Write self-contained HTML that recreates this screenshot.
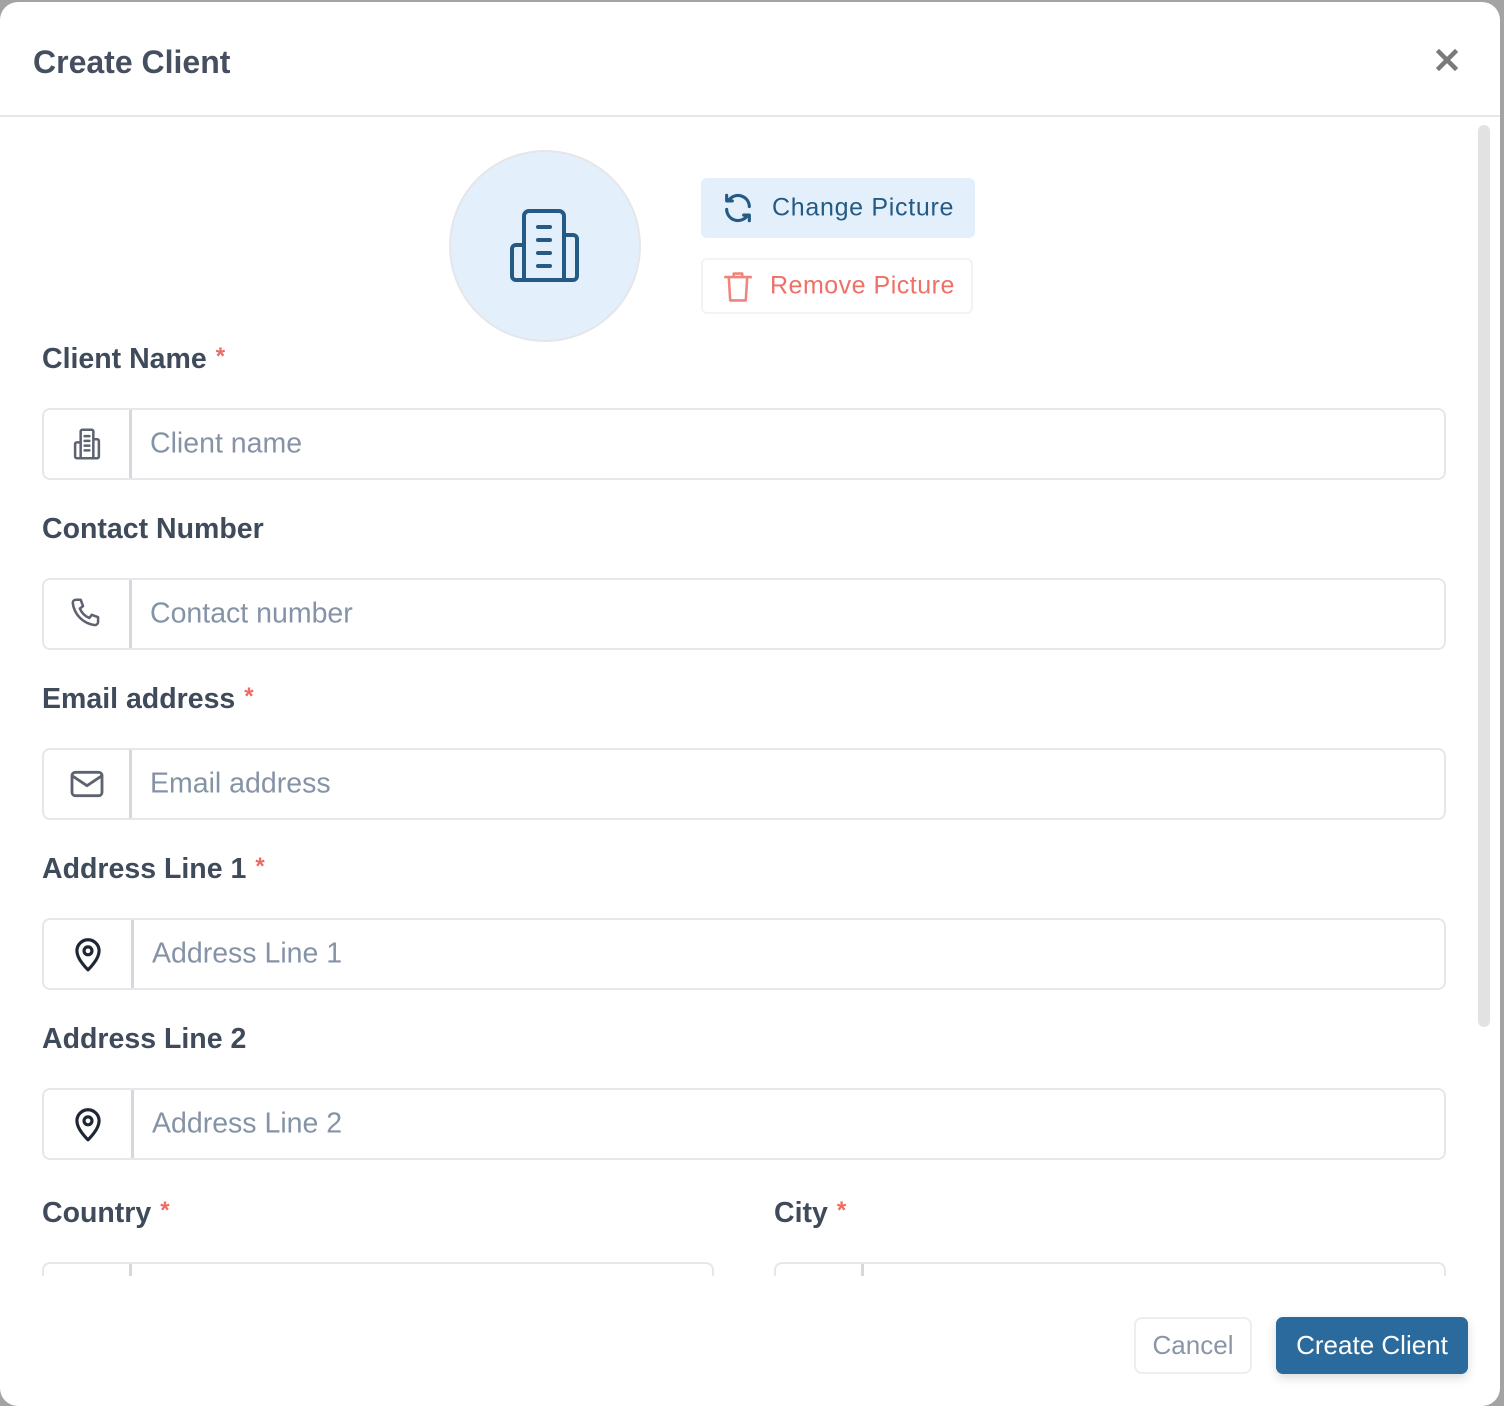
<!DOCTYPE html>
<html><head><meta charset="utf-8"><style>
*{box-sizing:border-box;margin:0;padding:0}
html,body{width:1504px;height:1406px;overflow:hidden}
body{background:#a3a3a3;font-family:"Liberation Sans",sans-serif;position:relative}
.modal{position:absolute;left:0;top:2px;width:1500px;height:1404px;background:#fff;border-radius:18px;overflow:hidden}
.title{position:absolute;left:33px;top:42px;font-size:32px;font-weight:bold;color:#454f5f}
.close{position:absolute;left:1436px;top:47px}
.hr{position:absolute;left:0;top:113px;width:1500px;height:2px;background:#e6e6ec}
.track{position:absolute;left:1478px;top:123px;width:12px;height:902px;border-radius:6px;background:#e2e2e2}
.circle{position:absolute;left:449px;top:148px;width:192px;height:192px;border-radius:50%;background:#e3f0fb;border:2px solid #e4e6ea}
.btn1{position:absolute;left:701px;top:176px;width:274px;height:60px;background:#e3f0fb;border-radius:6px;color:#245a84;font-size:25px;letter-spacing:.7px}
.btn2{position:absolute;left:701px;top:256px;width:272px;height:56px;border:2px solid #f3f3f3;border-radius:6px;color:#ee7066;font-size:25px;letter-spacing:.5px}
.btn1 span,.btn2 span{position:absolute;left:71px;top:50%;transform:translateY(-50%)}
.btn2 span{left:67px}
.btn1 svg,.btn2 svg{position:absolute}
.lbl{position:absolute;left:42px;font-size:28.5px;font-weight:bold;color:#3f4a5a}
.lbl b{color:#ef6a5f;font-size:24px;vertical-align:top;margin-left:9px}
.inp{position:absolute;left:42px;width:1404px;height:72px;border:2px solid #e5e7eb;border-radius:8px}
.inp .ic{position:absolute;left:0;top:0;width:88px;height:100%;border-right:3px solid #d5d8dd;display:flex;align-items:center;justify-content:center}
.inp .ph{position:absolute;left:106px;top:50%;transform:translateY(-50%);font-size:28.5px;color:#8593a6}
.cancel{position:absolute;left:1134px;top:1315px;width:118px;height:57px;border:2px solid #eceef0;border-radius:8px;color:#8a96a6;font-size:26px;text-align:center;line-height:53px}
.create{position:absolute;left:1276px;top:1315px;width:192px;height:57px;background:#2b6a9c;border-radius:7px;color:#fff;font-size:26px;text-align:center;line-height:57px;box-shadow:0 4px 10px rgba(0,0,0,.15)}
</style></head><body>
<div class="modal">
<div class="title">Create Client</div>
<svg class="close" width="22" height="22" viewBox="0 0 22 22"><path d="M3 3L19 19M19 3L3 19" stroke="#7a7a7a" stroke-width="4.5" stroke-linecap="square"/></svg>
<div class="hr"></div>
<div class="track"></div>
<div class="circle"></div>
<svg style="position:absolute;left:507px;top:203px" width="80" height="80" viewBox="0 0 80 80"><g fill="none" stroke="#245a84" stroke-width="4" stroke-linecap="round" stroke-linejoin="round"><path d="M17 75V11a5 5 0 0 1 5-5h30a5 5 0 0 1 5 5v64z"/><path d="M17 40H9a4 4 0 0 0-4 4v27a4 4 0 0 0 4 4h8"/><path d="M57 30h9a4 4 0 0 1 4 4v37a4 4 0 0 1-4 4H57"/><path d="M31 22h12M31 35h12M31 48h12M31 61h12"/></g></svg>
<div class="btn1"><svg style="left:20px;top:13px" width="34" height="34" viewBox="0 0 24 24" fill="none" stroke="#245a84" stroke-width="2.2" stroke-linecap="round" stroke-linejoin="round"><path d="M20 11A8 8 0 0 0 5.5 6.5M4 3v4h4"/><path d="M4 13a8 8 0 0 0 14.5 4.5M20 21v-4h-4"/></svg><span>Change Picture</span></div>
<div class="btn2"><svg style="left:18px;top:10px" width="34" height="34" viewBox="0 0 24 24" fill="none" stroke="#ee857c" stroke-width="1.8" stroke-linecap="round" stroke-linejoin="round"><path d="M3 5h18M9 5V2.5h6V5M5.5 5l1 16.5h11l1-16.5"/></svg><span>Remove Picture</span></div>

<div class="lbl" style="top:341px">Client Name<b>*</b></div>
<div class="inp" style="top:406px"><div class="ic"><svg width="38" height="38" viewBox="0 0 24 24" fill="none" stroke="#5d6470" stroke-width="1.6" stroke-linejoin="round" stroke-linecap="round"><path d="M8 21V4a1 1 0 0 1 1-1h6a1 1 0 0 1 1 1v17zM8 11H5.5a1 1 0 0 0-1 1v8a1 1 0 0 0 1 1H8M16 9h2.5a1 1 0 0 1 1 1v10a1 1 0 0 1-1 1H16M10.5 7h3M10.5 10h3M10.5 13h3M10.5 16h3"/></svg></div><div class="ph">Client name</div></div>

<div class="lbl" style="top:511px">Contact Number</div>
<div class="inp" style="top:576px"><div class="ic"><svg width="38" height="38" viewBox="0 0 24 24" fill="none" stroke="#5d6470" stroke-width="1.6" stroke-linejoin="round"><path d="M5 3h3l1.5 4-2 1.5a11 11 0 0 0 6 6l1.5-2 4 1.5v3a2 2 0 0 1-2 2A16 16 0 0 1 3 5a2 2 0 0 1 2-2z"/></svg></div><div class="ph">Contact number</div></div>

<div class="lbl" style="top:681px">Email address<b>*</b></div>
<div class="inp" style="top:746px"><div class="ic"><svg width="40" height="40" viewBox="0 0 24 24" fill="none" stroke="#5d6470" stroke-width="1.7" stroke-linejoin="round"><rect x="3" y="5" width="18" height="14" rx="2"/><path d="M3 7l9 6 9-6"/></svg></div><div class="ph">Email address</div></div>

<div class="lbl" style="top:851px">Address Line 1<b>*</b></div>
<div class="inp" style="top:916px"><div class="ic" style="width:90px"><svg width="38" height="38" viewBox="0 0 24 24" fill="none" stroke="#1f2733" stroke-width="2" stroke-linejoin="round"><path d="M12 22s7-6.5 7-12a7 7 0 0 0-14 0c0 5.5 7 12 7 12z"/><circle cx="12" cy="10" r="2.5"/></svg></div><div class="ph" style="left:108px">Address Line 1</div></div>

<div class="lbl" style="top:1021px">Address Line 2</div>
<div class="inp" style="top:1086px"><div class="ic" style="width:90px"><svg width="38" height="38" viewBox="0 0 24 24" fill="none" stroke="#1f2733" stroke-width="2" stroke-linejoin="round"><path d="M12 22s7-6.5 7-12a7 7 0 0 0-14 0c0 5.5 7 12 7 12z"/><circle cx="12" cy="10" r="2.5"/></svg></div><div class="ph" style="left:108px">Address Line 2</div></div>

<div class="lbl" style="top:1195px">Country<b>*</b></div>
<div class="lbl" style="top:1195px;left:774px">City<b>*</b></div>
<div style="position:absolute;left:0;top:1260px;width:1470px;height:14px;overflow:hidden">
<div class="inp" style="top:0;left:42px;width:672px"><div class="ic"></div></div>
<div class="inp" style="top:0;left:774px;width:672px"><div class="ic"></div></div>
</div>
<div class="cancel">Cancel</div>
<div class="create">Create Client</div>
</div>
</body></html>
